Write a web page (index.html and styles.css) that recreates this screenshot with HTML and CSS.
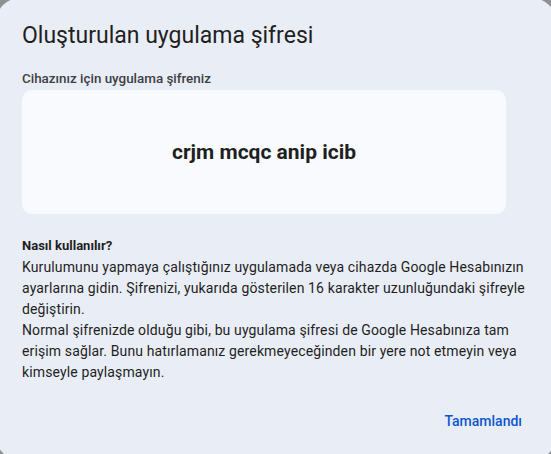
FILE: index.html
```html
<!DOCTYPE html>
<html lang="tr">
<head>
<meta charset="utf-8">
<link rel="stylesheet" href="styles.css">
</head>
<body>
<div class="dialog">
  <h1 class="title">Oluşturulan uygulama şifresi</h1>
  <div class="label">Cihazınız için uygulama şifreniz</div>
  <div class="card"><span class="pw">crjm mcqc anip icib</span></div>
  <div class="howto">
    <div class="howto-title">Nasıl kullanılır?</div>
    <p>Kurulumunu yapmaya çalıştığınız uygulamada veya cihazda Google Hesabınızın ayarlarına gidin. Şifrenizi, yukarıda gösterilen 16 karakter uzunluğundaki şifreyle değiştirin.</p>
    <p>Normal şifrenizde olduğu gibi, bu uygulama şifresi de Google Hesabınıza tam erişim sağlar. Bunu hatırlamanız gerekmeyeceğinden bir yere not etmeyin veya kimseyle paylaşmayın.</p>
  </div>
  <div class="actions"><button class="btn">Tamamlandı</button></div>
</div>
</body>
</html>
```
FILE: styles.css
```css
html, body { margin: 0; padding: 0; }
body {
  background: #8f9092;
  width: 551px;
  height: 454px;
  overflow: hidden;
  font-family: Roboto, "Noto Sans", sans-serif;
  color: #1f1f1f;
}
.dialog {
  box-sizing: border-box;
  width: 560px;
  height: 462px;
  margin: -2px 0 0 -4px;
  background: #e9edf5;
  border-radius: 24px;
  padding: 22px 0 0 26px;
  display: flex;
  flex-direction: column;
}
.title {
  margin: 0;
  font-size: 23px;
  font-weight: 400;
  line-height: 32px;
  color: #1f1f1f;
}
.label {
  margin-top: 19px;
  font-size: 13.4px;
  font-weight: 500;
  line-height: 16px;
  color: #3c3f43;
}
.card {
  margin-top: 3px;
  width: 484px;
  height: 124px;
  background: #f8fafd;
  border-radius: 10px;
  display: flex;
  align-items: center;
  justify-content: center;
}
.pw {
  font-size: 21px;
  font-weight: 700;
  color: #1f1f1f;
}
.howto {
  margin-top: 21px;
  font-size: 14px;
  line-height: 21px;
  color: #1f1f1f;
  width: 510px;
  letter-spacing: 0.13px;
}
.howto-title { font-weight: 700; font-size: 13px; color: #1f1f1f; letter-spacing: 0; line-height: 22px; }
.howto p { margin: 0; }
.actions {
  display: flex;
  justify-content: flex-end;
  width: 500px;
  margin-top: 30px;
}
.btn {
  background: none;
  border: 0;
  padding: 0;
  font-family: inherit;
  font-size: 14px;
  font-weight: 500;
  color: #0b57d0;
}
```
